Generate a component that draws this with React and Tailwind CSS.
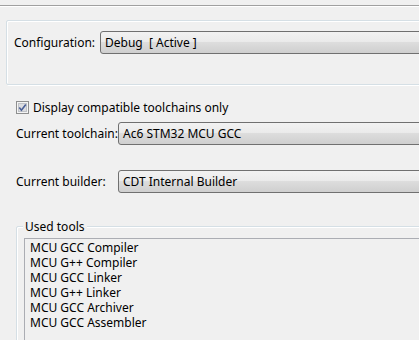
import React from "react";

// Windows-style combo box (closed), extends past the right edge
const Combo = ({ value }) => (
    <div className="h-[23px] w-[360px] shrink-0 rounded-[3px] border border-[#707070] bg-[linear-gradient(#f2f2f2_0%,#ebebeb_45%,#dddddd_50%,#cfcfcf_100%)] pl-[4px] flex items-center text-black">
        <span className="whitespace-pre">{value}</span>
    </div>
);

const CheckBox = () => (
    <svg width="13" height="13" viewBox="0 0 13 13" className="shrink-0">
        <rect x="0.5" y="0.5" width="12" height="12" fill="#f4f4f4" stroke="#8e8f8f" />
        <rect x="2.5" y="2.5" width="8" height="8" fill="#dcdde0" stroke="#c0c3c8" />
        <path d="M3.3 6.6 L5.4 9.2 L9.8 3.4" fill="none" stroke="#4a5f97" strokeWidth="1.6" />
    </svg>
);

const tools = [
    "MCU GCC Compiler",
    "MCU G++ Compiler",
    "MCU GCC Linker",
    "MCU G++ Linker",
    "MCU GCC Archiver",
    "MCU GCC Assembler",
];

export default function App() {
    return (
        <div className="w-[419px] h-[340px] overflow-hidden bg-[#f0f0f0] text-[12px] leading-[15px] text-black font-['Noto_Sans','Liberation_Sans',sans-serif]">
            {/* top separator */}
            <div className="h-[5px]" />
            <div className="h-[2px] border-t border-[#a0a0a0] border-b border-b-white" />

            {/* configuration group */}
            <div className="mt-[13px] ml-[6px] w-[430px] h-[65px] rounded-[2px] border border-[#d5dfe5] shadow-[inset_1px_1px_0_#fff,1px_1px_0_#fff] pt-[10px] pl-[7px]">
                <div className="flex items-center whitespace-nowrap">
                    <span className="w-[86px] shrink-0">Configuration:</span>
                    <Combo value="Debug  [ Active ]" />
                </div>
            </div>

            {/* toolchain options */}
            <div className="mt-[15px] ml-[16px] flex items-center gap-[4px]">
                <CheckBox />
                <span>Display compatible toolchains only</span>
            </div>

            <div className="mt-[7px] ml-[16px] flex items-center whitespace-nowrap">
                <span className="w-[102px] shrink-0">Current toolchain:</span>
                <Combo value="Ac6 STM32 MCU GCC" />
            </div>

            <div className="mt-[25px] ml-[16px] flex items-center whitespace-nowrap">
                <span className="w-[102px] shrink-0">Current builder:</span>
                <Combo value="CDT Internal Builder" />
            </div>

            {/* used tools group */}
            <div className="relative mt-[33px] ml-[16px] w-[430px] h-[200px] rounded-[2px] border border-[#d5dfe5] shadow-[inset_1px_1px_0_#fff,1px_1px_0_#fff] pt-[11px] pl-[7px]">
                <span className="absolute -top-[8px] left-[6px] bg-[#f0f0f0] px-[2px]">Used tools</span>
                <div className="h-[200px] border-t border-l border-[#abadb3] pl-[5px] pt-[1px]">
                    {tools.map((t) => (
                        <div key={t}>{t}</div>
                    ))}
                </div>
            </div>
        </div>
    );
}
